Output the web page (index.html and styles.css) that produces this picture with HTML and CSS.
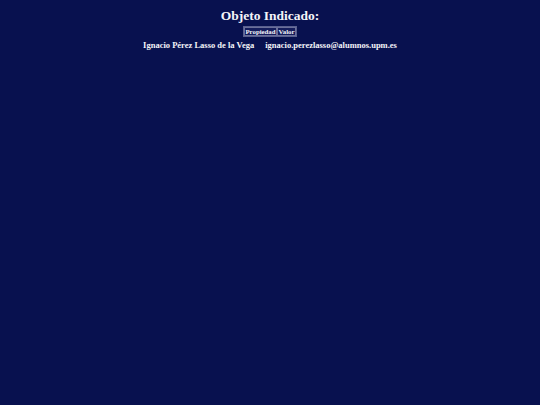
FILE: index.html
```html
<!DOCTYPE html>
<html lang="es">
<head>
<meta charset="utf-8">
<title>Objeto Indicado</title>
<link rel="stylesheet" href="styles.css">
</head>
<body>
<main class="page">
  <h1 class="title">Objeto Indicado:</h1>
  <table class="props">
    <thead>
      <tr><th>Propiedad</th><th>Valor</th></tr>
    </thead>
  </table>
  <footer class="author">
    <span>Ignacio Pérez Lasso de la Vega</span>
    <span>ignacio.perezlasso@alumnos.upm.es</span>
  </footer>
</main>
</body>
</html>
```

FILE: styles.css
```css
html, body {
  margin: 0;
  padding: 0;
  background: #08114f;
  height: 100%;
}
.page {
  display: flex;
  flex-direction: column;
  align-items: center;
  padding-top: 8px;
  color: #f4f4f8;
  font-family: "Liberation Serif", serif;
  font-weight: bold;
}
.title {
  margin: 0;
  font-size: 13.5px;
  line-height: 16px;
}
.props {
  margin-top: 2px;
  border: 1px solid #5a6090;
  border-spacing: 0;
}
.props th {
  border: 1px solid #6a6f9a;
  background: #141c5c;
  font-size: 6.8px;
  line-height: 7px;
  padding: 0 0.5px;
}
.author {
  display: flex;
  gap: 11px;
  margin-top: 3px;
  font-size: 8.5px;
  line-height: 10px;
}
```
